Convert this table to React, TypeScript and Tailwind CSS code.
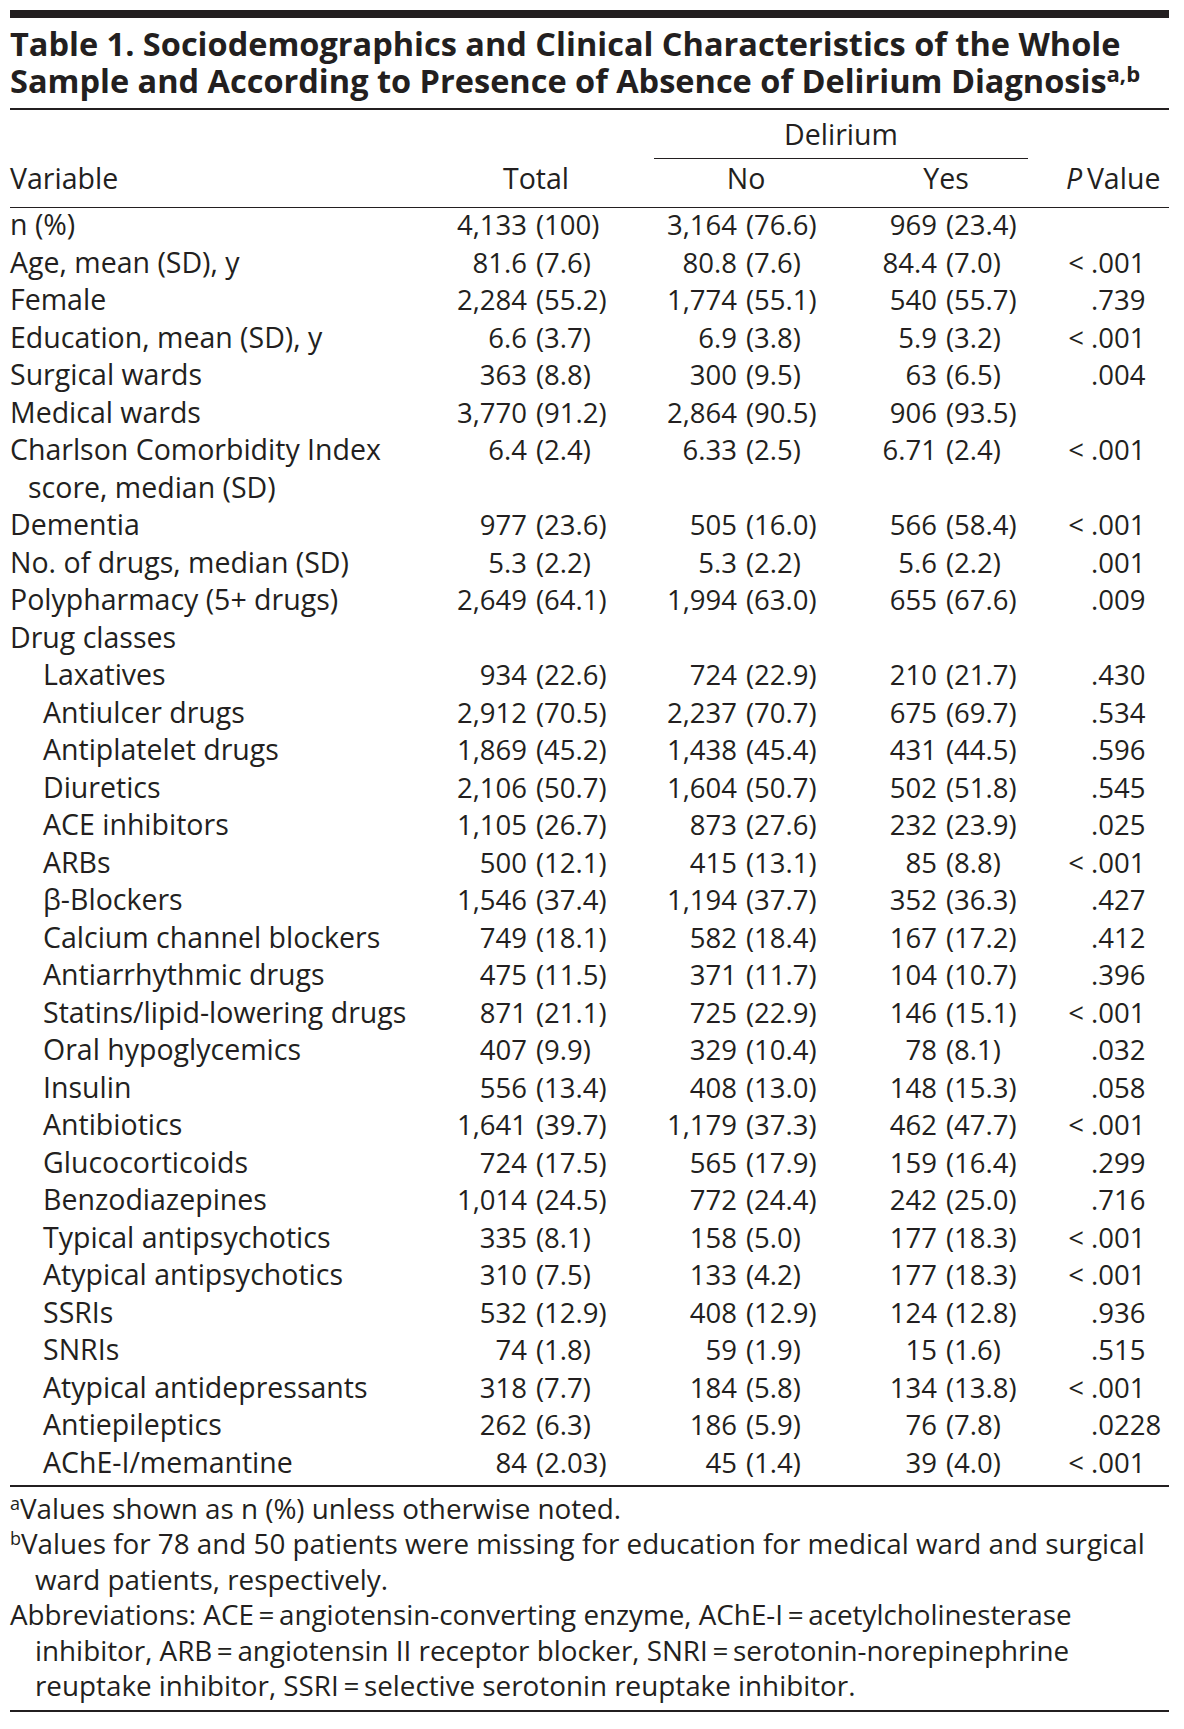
import React from "react";

type R = {
  label: string;
  label2?: string;
  indent?: boolean;
  v?: [string, string, string, string, string, string, string];
};

const rows: R[] = [
  { label: "n (%)", v: ["4,133", "(100)", "3,164", "(76.6)", "969", "(23.4)", ""] },
  { label: "Age, mean (SD), y", v: ["81.6", "(7.6)", "80.8", "(7.6)", "84.4", "(7.0)", "<.001"] },
  { label: "Female", v: ["2,284", "(55.2)", "1,774", "(55.1)", "540", "(55.7)", ".739"] },
  { label: "Education, mean (SD), y", v: ["6.6", "(3.7)", "6.9", "(3.8)", "5.9", "(3.2)", "<.001"] },
  { label: "Surgical wards", v: ["363", "(8.8)", "300", "(9.5)", "63", "(6.5)", ".004"] },
  { label: "Medical wards", v: ["3,770", "(91.2)", "2,864", "(90.5)", "906", "(93.5)", ""] },
  {
    label: "Charlson Comorbidity Index",
    label2: "score, median (SD)",
    v: ["6.4", "(2.4)", "6.33", "(2.5)", "6.71", "(2.4)", "<.001"],
  },
  { label: "Dementia", v: ["977", "(23.6)", "505", "(16.0)", "566", "(58.4)", "<.001"] },
  { label: "No. of drugs, median (SD)", v: ["5.3", "(2.2)", "5.3", "(2.2)", "5.6", "(2.2)", ".001"] },
  { label: "Polypharmacy (5+ drugs)", v: ["2,649", "(64.1)", "1,994", "(63.0)", "655", "(67.6)", ".009"] },
  { label: "Drug classes" },
  { label: "Laxatives", indent: true, v: ["934", "(22.6)", "724", "(22.9)", "210", "(21.7)", ".430"] },
  { label: "Antiulcer drugs", indent: true, v: ["2,912", "(70.5)", "2,237", "(70.7)", "675", "(69.7)", ".534"] },
  { label: "Antiplatelet drugs", indent: true, v: ["1,869", "(45.2)", "1,438", "(45.4)", "431", "(44.5)", ".596"] },
  { label: "Diuretics", indent: true, v: ["2,106", "(50.7)", "1,604", "(50.7)", "502", "(51.8)", ".545"] },
  { label: "ACE inhibitors", indent: true, v: ["1,105", "(26.7)", "873", "(27.6)", "232", "(23.9)", ".025"] },
  { label: "ARBs", indent: true, v: ["500", "(12.1)", "415", "(13.1)", "85", "(8.8)", "<.001"] },
  { label: "\u03b2-Blockers", indent: true, v: ["1,546", "(37.4)", "1,194", "(37.7)", "352", "(36.3)", ".427"] },
  { label: "Calcium channel blockers", indent: true, v: ["749", "(18.1)", "582", "(18.4)", "167", "(17.2)", ".412"] },
  { label: "Antiarrhythmic drugs", indent: true, v: ["475", "(11.5)", "371", "(11.7)", "104", "(10.7)", ".396"] },
  { label: "Statins/lipid-lowering drugs", indent: true, v: ["871", "(21.1)", "725", "(22.9)", "146", "(15.1)", "<.001"] },
  { label: "Oral hypoglycemics", indent: true, v: ["407", "(9.9)", "329", "(10.4)", "78", "(8.1)", ".032"] },
  { label: "Insulin", indent: true, v: ["556", "(13.4)", "408", "(13.0)", "148", "(15.3)", ".058"] },
  { label: "Antibiotics", indent: true, v: ["1,641", "(39.7)", "1,179", "(37.3)", "462", "(47.7)", "<.001"] },
  { label: "Glucocorticoids", indent: true, v: ["724", "(17.5)", "565", "(17.9)", "159", "(16.4)", ".299"] },
  { label: "Benzodiazepines", indent: true, v: ["1,014", "(24.5)", "772", "(24.4)", "242", "(25.0)", ".716"] },
  { label: "Typical antipsychotics", indent: true, v: ["335", "(8.1)", "158", "(5.0)", "177", "(18.3)", "<.001"] },
  { label: "Atypical antipsychotics", indent: true, v: ["310", "(7.5)", "133", "(4.2)", "177", "(18.3)", "<.001"] },
  { label: "SSRIs", indent: true, v: ["532", "(12.9)", "408", "(12.9)", "124", "(12.8)", ".936"] },
  { label: "SNRIs", indent: true, v: ["74", "(1.8)", "59", "(1.9)", "15", "(1.6)", ".515"] },
  { label: "Atypical antidepressants", indent: true, v: ["318", "(7.7)", "184", "(5.8)", "134", "(13.8)", "<.001"] },
  { label: "Antiepileptics", indent: true, v: ["262", "(6.3)", "186", "(5.9)", "76", "(7.8)", ".0228"] },
  { label: "AChE-I/memantine", indent: true, v: ["84", "(2.03)", "45", "(1.4)", "39", "(4.0)", "<.001"] },
];

function Row({ r }: { r: R }) {
  const v = r.v;
  const pv = v ? v[6] : "";
  const pre = pv.startsWith("<") ? "<" : "";
  const rest = pv.startsWith("<") ? pv.slice(1) : pv;
  return (
    <div className="flex items-start whitespace-nowrap">
      <div className={`w-[420px] shrink-0 text-[28.5px] ${r.indent ? "pl-[33px]" : ""}`}>
        <div>{r.label}</div>
        {r.label2 && <div className="pl-[18px]">{r.label2}</div>}
      </div>
      {v && (
        <>
          <span className="w-[97px] shrink-0 text-right">{v[0]}</span>
          <span className="w-[113px] shrink-0 pl-[9px]">{v[1]}</span>
          <span className="w-[97px] shrink-0 text-right">{v[2]}</span>
          <span className="w-[103px] shrink-0 pl-[9px]">{v[3]}</span>
          <span className="w-[97px] shrink-0 text-right">{v[4]}</span>
          <span className="w-[103px] shrink-0 pl-[9px]">{v[5]}</span>
          <span className="w-[51px] shrink-0 pr-[7px] text-right">{pre}</span>
          <span className="shrink-0">{rest}</span>
        </>
      )}
    </div>
  );
}

export default function App() {
  return (
    <div className="w-[1184px] min-h-[1729px] bg-white px-[10px] pt-[10px] font-['Open_Sans','Noto_Sans',sans-serif] text-[#231f20]">
      <div className="w-[1159px]">
        <div className="h-[8px] bg-[#231f20]" />
        <div className="mt-[8px] whitespace-nowrap text-[32.5px] font-bold leading-[36.5px]">
          <div>Table 1. Sociodemographics and Clinical Characteristics of the Whole</div>
          <div>
            Sample and According to Presence of Absence of Delirium Diagnosis
            <sup className="text-[22px] font-bold">a,b</sup>
          </div>
        </div>
        <div className="mt-[9px] h-[2px] bg-[#231f20]" />

        <div className="text-[27.5px] leading-[37.5px]">
          <div className="mt-[6px] flex">
            <div className="ml-[644px] w-[374px] text-center text-[28.5px]">Delirium</div>
          </div>
          <div className="mt-[4px] ml-[644px] h-[1.5px] w-[374px] bg-[#231f20]" />
          <div className="mt-[1px] flex whitespace-nowrap text-[28.5px]">
            <div className="w-[420px] shrink-0">Variable</div>
            <div className="w-[212px] shrink-0 text-center">Total</div>
            <div className="w-[208px] shrink-0 text-center">No</div>
            <div className="w-[192px] shrink-0 text-center">Yes</div>
            <div className="flex-1 pl-[24px]">
              <i>P</i>
              {"\u2009"}Value
            </div>
          </div>
          <div className="mt-[9px] h-[1.5px] bg-[#231f20]" />

          <div className="-mt-[2px]">
            {rows.map((r, i) => (
              <Row key={i} r={r} />
            ))}
          </div>
          <div className="mt-[4px] h-[1.5px] bg-[#231f20]" />

          <div className="mt-[4px] whitespace-nowrap text-[27.8px] leading-[35.5px]">
            <div>
              <sup className="text-[18px]">a</sup>Values shown as n (%) unless otherwise noted.
            </div>
            <div>
              <sup className="text-[18px]">b</sup>Values for 78 and 50 patients were missing for education for medical ward and surgical
            </div>
            <div className="pl-[25px]">ward patients, respectively.</div>
            <div>
              Abbreviations: ACE{"\u2009=\u2009"}angiotensin-converting enzyme, AChE-I{"\u2009=\u2009"}acetylcholinesterase
            </div>
            <div className="pl-[25px]">
              inhibitor, ARB{"\u2009=\u2009"}angiotensin II receptor blocker, SNRI{"\u2009=\u2009"}serotonin-norepinephrine
            </div>
            <div className="pl-[25px]">
              reuptake inhibitor, SSRI{"\u2009=\u2009"}selective serotonin reuptake inhibitor.
            </div>
          </div>
          <div className="mt-[6px] h-[2px] bg-[#231f20]" />
        </div>
      </div>
    </div>
  );
}
